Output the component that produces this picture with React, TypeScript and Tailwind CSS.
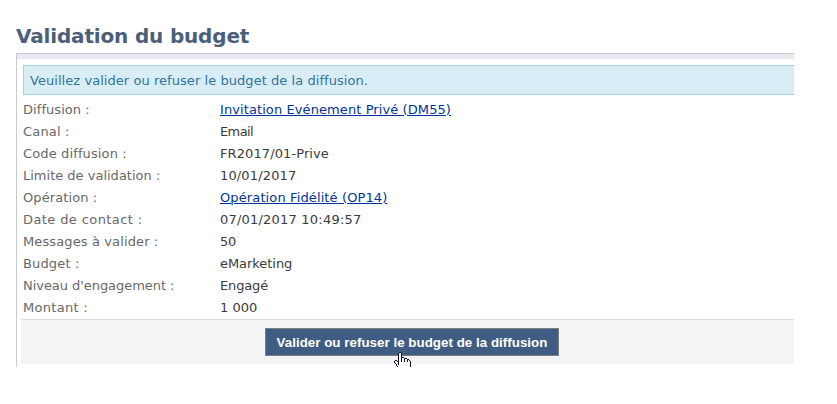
type Row = { label: string; value: string; link?: boolean; labelTracking: string; valueTracking: string };

const rows: Row[] = [
  { label: "Diffusion :", value: "Invitation Evénement Privé (DM55)", link: true, labelTracking: "tracking-[0.06px]", valueTracking: "tracking-[0.09px]" },
  { label: "Canal :", value: "Email", labelTracking: "tracking-[0.17px]", valueTracking: "tracking-[-0.6px]" },
  { label: "Code diffusion :", value: "FR2017/01-Prive", labelTracking: "tracking-[0.13px]", valueTracking: "tracking-[0.1px]" },
  { label: "Limite de validation :", value: "10/01/2017", labelTracking: "tracking-normal", valueTracking: "tracking-[0.15px]" },
  { label: "Opération :", value: "Opération Fidélité (OP14)", link: true, labelTracking: "tracking-[0.1px]", valueTracking: "tracking-[0.12px]" },
  { label: "Date de contact :", value: "07/01/2017 10:49:57", labelTracking: "tracking-[0.4px]", valueTracking: "tracking-[0.21px]" },
  { label: "Messages à valider :", value: "50", labelTracking: "tracking-[0.12px]", valueTracking: "tracking-[-0.3px]" },
  { label: "Budget :", value: "eMarketing", labelTracking: "tracking-[0.15px]", valueTracking: "tracking-[-0.05px]" },
  { label: "Niveau d'engagement :", value: "Engagé", labelTracking: "tracking-[-0.05px]", valueTracking: "tracking-[-0.15px]" },
  { label: "Montant :", value: "1 000", labelTracking: "tracking-[0.3px]", valueTracking: "tracking-normal" },
];

function HandCursor() {
  return (
    <svg className="absolute top-[23px] left-[128px]" width="17" height="15" viewBox="0 0 17 15" shapeRendering="crispEdges">
      <path
        d="M5 1H8V6H10V7H13V8H15V9H16V15H4V14H3V12H2V11H1V9H3V10H5Z"
        fill="#ffffff"
      />
      <path
        d="M5 0H7V1H5Z M4 1H5V13H4Z M7 1H8V10H7Z M8 5H10V6H8Z M10 6H11V10H10Z M11 6H13V7H11Z M13 7H14V10H13Z M14 7H15V8H14Z M15 8H16V9H15Z M16 9H17V15H16Z M1 8H3V9H1Z M0 9H1V11H0Z M3 9H4V10H3Z M1 11H2V12H1Z M2 12H3V14H2Z M3 14H4V15H3Z"
        fill="#10102a"
      />
    </svg>
  );
}

export default function App() {
  return (
    <div className="h-[404px] w-[837px] bg-white pl-4 pt-[21px] font-['DejaVu_Sans',Verdana,sans-serif] text-[13px]">
      <h1 className="h-8 text-xl leading-[30px] font-bold tracking-[-0.17px] whitespace-nowrap text-[#4b6078]">
        Validation du budget
      </h1>
      <div className="h-[314px] w-[778px] border-t border-l border-[#c9cacd]">
        <div className="h-[5px] bg-[#e8eaf1]" />
        <div className="mt-1.5 ml-1.5 h-[30px] border border-r-0 border-[#a3d4de] bg-[#d9edf7] pl-1.5 leading-[30px] tracking-[0.055px] text-[#31759b]">
          Veuillez valider ou refuser le budget de la diffusion.
        </div>
        <dl className="mt-1 ml-1.5 h-[220px]">
          {rows.map((row) => (
            <div key={row.label} className="flex h-[22px] leading-[22px] whitespace-nowrap">
              <dt className={`w-[197px] text-[#686868] ${row.labelTracking}`}>{row.label}</dt>
              <dd className={`text-[#3b3b3b] ${row.valueTracking}`}>
                {row.link ? (
                  <a href="#" className="text-[#003399] underline decoration-1 underline-offset-1">{row.value}</a>
                ) : (
                  row.value
                )}
              </dd>
            </div>
          ))}
        </dl>
        <div className="ml-1 flex h-[45px] items-start border-t border-[#dadada] bg-[#f4f4f4] pt-2 pl-[244px]">
          <button className="relative h-7 w-[294px] border border-[#808080] bg-[#3f5d82] font-['Liberation_Sans',Arial,sans-serif] text-[13.333px] leading-[28px] font-bold tracking-[0.03px] whitespace-nowrap text-white">
            Valider ou refuser le budget de la diffusion
            <HandCursor />
          </button>
        </div>
      </div>
    </div>
  );
}
